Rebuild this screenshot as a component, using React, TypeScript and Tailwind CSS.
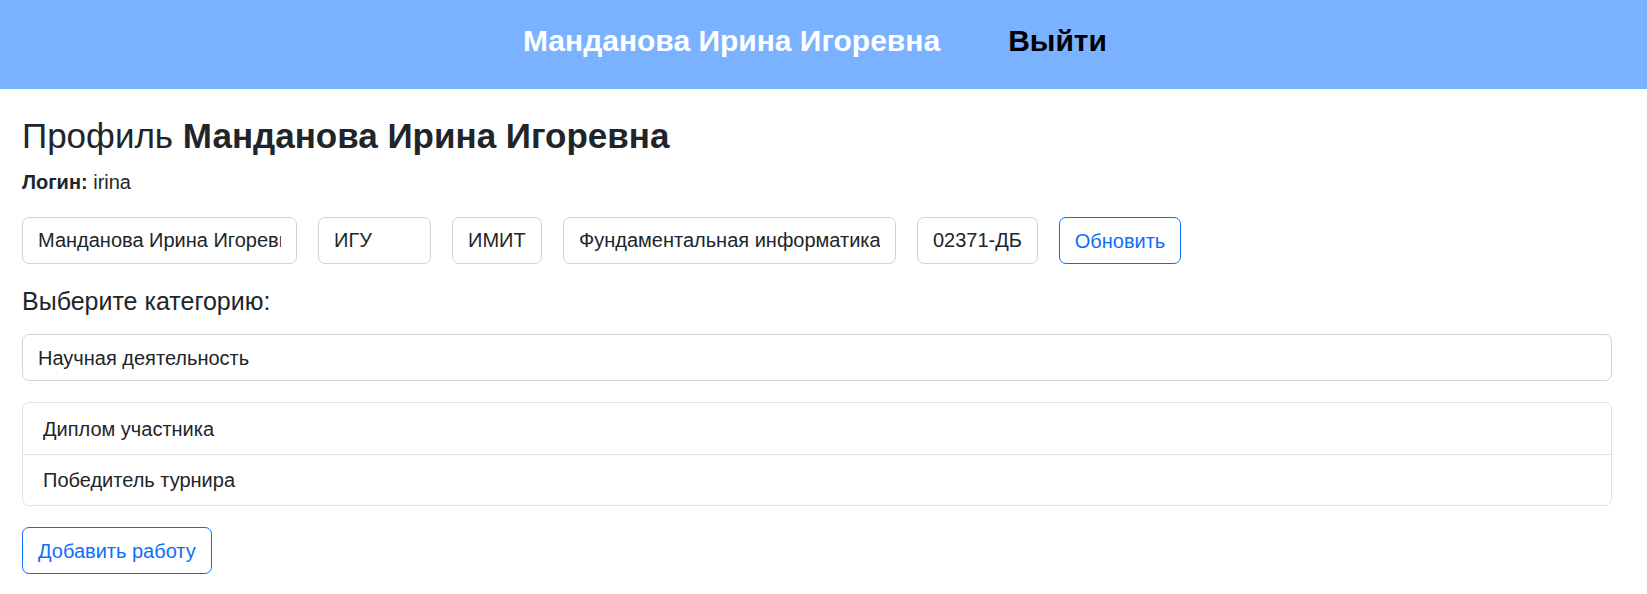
import React from "react"

const fields = [
  { value: "Манданова Ирина Игоревна", width: "w-[275px]" },
  { value: "ИГУ", width: "w-[113px]" },
  { value: "ИМИТ", width: "w-[90px]" },
  { value: "Фундаментальная информатика", width: "w-[333px]" },
  { value: "02371-ДБ", width: "w-[121px]" },
]

const works = ["Диплом участника", "Победитель турнира"]

const App = () => {
  return (
    <div className="min-h-screen bg-white font-['Liberation_Sans',Arial,sans-serif] text-[#212529]">
      <header className="h-[89px] bg-[#7ab2ff] flex items-center justify-center gap-[68px] pr-[17px] pb-[8px]">
        <span className="text-white font-bold text-[30px] leading-none">Манданова Ирина Игоревна</span>
        <a href="#" className="text-black font-bold text-[30px] leading-none">
          Выйти
        </a>
      </header>

      <main className="pl-[22px] pr-[35px] pt-[26px]">
        <h3 className="text-[35px] leading-[1.2] font-normal mb-[10px]">
          Профиль <b className="font-bold">Манданова Ирина Игоревна</b>
        </h3>
        <p className="text-[20px] leading-[1.5] mb-[20px]">
          <b>Логин:</b> irina
        </p>

        <div className="flex gap-[21px]">
          {fields.map((f) => (
            <input
              key={f.value}
              readOnly
              value={f.value}
              className={`${f.width} h-[47px] border border-[#ced4da] rounded-[7px] px-[15px] text-[20px] text-[#212529] outline-none bg-white`}
            />
          ))}
          <button className="w-[122px] h-[47px] border border-[#0d6efd] rounded-[7px] text-[20px] text-[#0d6efd] bg-white">
            Обновить
          </button>
        </div>

        <h5 className="text-[25px] leading-[1.2] mt-[22px] mb-[18px]">Выберите категорию:</h5>

        <select className="w-full h-[47px] border border-[#ced4da] rounded-[7px] px-[15px] text-[20px] text-[#212529] bg-white appearance-none outline-none">
          <option>Научная деятельность</option>
        </select>

        <ul className="mt-[21px] border border-[#dee2e6] rounded-[7px]">
          {works.map((w, i) => (
            <li
              key={w}
              className={`h-[51px] flex items-center px-[20px] text-[20px] ${i > 0 ? "border-t border-[#dee2e6]" : ""}`}
            >
              {w}
            </li>
          ))}
        </ul>

        <button className="mt-[21px] h-[47px] px-[15px] border border-[#0d6efd] rounded-[7px] text-[20px] text-[#0d6efd] bg-white">
          Добавить работу
        </button>
      </main>
    </div>
  )
}

export default App
